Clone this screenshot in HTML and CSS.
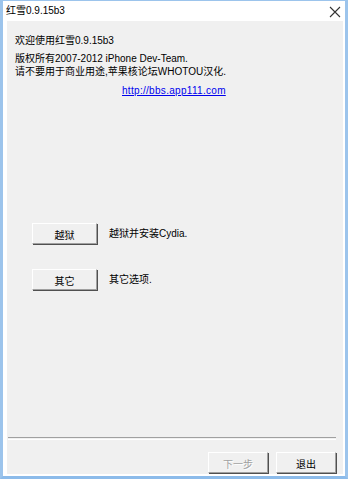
FILE: index.html
```html
<!DOCTYPE html>
<html>
<head>
<meta charset="utf-8">
<link rel="stylesheet" href="styles.css">
</head>
<body>
<div class="window">
  <div class="titlebar">
    <span class="title">红雪0.9.15b3</span>
    <svg class="close" width="12" height="12" viewBox="0 0 12 12"><path d="M1 1 L11 11 M11 1 L1 11" stroke="#333" stroke-width="1.1" fill="none"/></svg>
  </div>
  <div class="content">
    <div class="intro">
      <div class="line l1">欢迎使用红雪0.9.15b3</div>
      <div class="line l2">版权所有2007-2012 iPhone Dev-Team.</div>
      <div class="line">请不要用于商业用途,苹果核论坛WHOTOU汉化.</div>
      <div class="line link-row"><span class="link">http://bbs.app111.com</span></div>
    </div>
    <div class="option first">
      <div class="btn">越狱</div>
      <div class="label">越狱并安装Cydia.</div>
    </div>
    <div class="option second">
      <div class="btn">其它</div>
      <div class="label">其它选项.</div>
    </div>
    <div class="separator"></div>
    <div class="footer">
      <div class="btn wide disabled">下一步</div>
      <div class="btn wide">退出</div>
    </div>
  </div>
</div>
</body>
</html>
```
FILE: styles.css
```css
html, body {
  margin: 0;
  padding: 0;
  background: #ffffff;
}
body {
  font-family: "Liberation Sans", "Noto Sans CJK SC", sans-serif;
  font-size: 10px;
  color: #000;
}
.window {
  width: 348px;
  height: 479px;
  box-sizing: border-box;
  border-left: 3px solid #9cc4ec;
  border-right: 3px solid #9cc4ec;
  border-bottom: 3px solid #8cbbea;
  border-top: 1px solid #9cc4ec;
  padding: 0 2px 2px 4px;
  background: #fff;
  display: flex;
  flex-direction: column;
}
.titlebar {
  height: 20px;
  display: flex;
  align-items: center;
  justify-content: space-between;
  background: #fff;
}
.title {
  margin-left: -1px;
  line-height: 12px;
}
.close {
  margin-right: 2px;
  margin-top: 1px;
}
.content {
  flex: 1;
  background: #f0f0f0;
  display: flex;
  flex-direction: column;
}
.intro {
  padding: 13px 0 0 8px;
}
.line {
  line-height: 13px;
  height: 13px;
  white-space: nowrap;
}
.l1 { margin-bottom: 5px; }
.link-row {
  margin-top: 6px;
  padding-left: 107px;
}
.link {
  color: #0000ee;
  text-decoration: underline;
  letter-spacing: 0.3px;
}
.option {
  display: flex;
  align-items: center;
  padding-left: 25px;
}
.first { margin-top: 126px; }
.second { margin-top: 25px; }
.btn {
  width: 63px;
  height: 18px;
  box-sizing: content-box;
  border-top: 1px solid #fff;
  border-left: 1px solid #fff;
  border-right: 1px solid #a0a0a0;
  border-bottom: 1px solid #a0a0a0;
  box-shadow: 1px 1px 0 #505050;
  display: flex;
  align-items: center;
  justify-content: center;
  padding-top: 1px;
}
.label {
  margin-left: 12px;
  margin-top: -3px;
}
.separator {
  margin: 147px 7px 0 1px;
  height: 1px;
  border-top: 1px solid #a0a0a0;
  border-bottom: 1px solid #ffffff;
}
.footer {
  margin-top: 12px;
  display: flex;
  justify-content: flex-end;
  gap: 8px;
  padding-right: 7px;
}
.btn.wide {
  width: 58px;
}
.btn.disabled {
  color: #a0a0a0;
  text-shadow: 1px 1px 0 #fff;
}
```
